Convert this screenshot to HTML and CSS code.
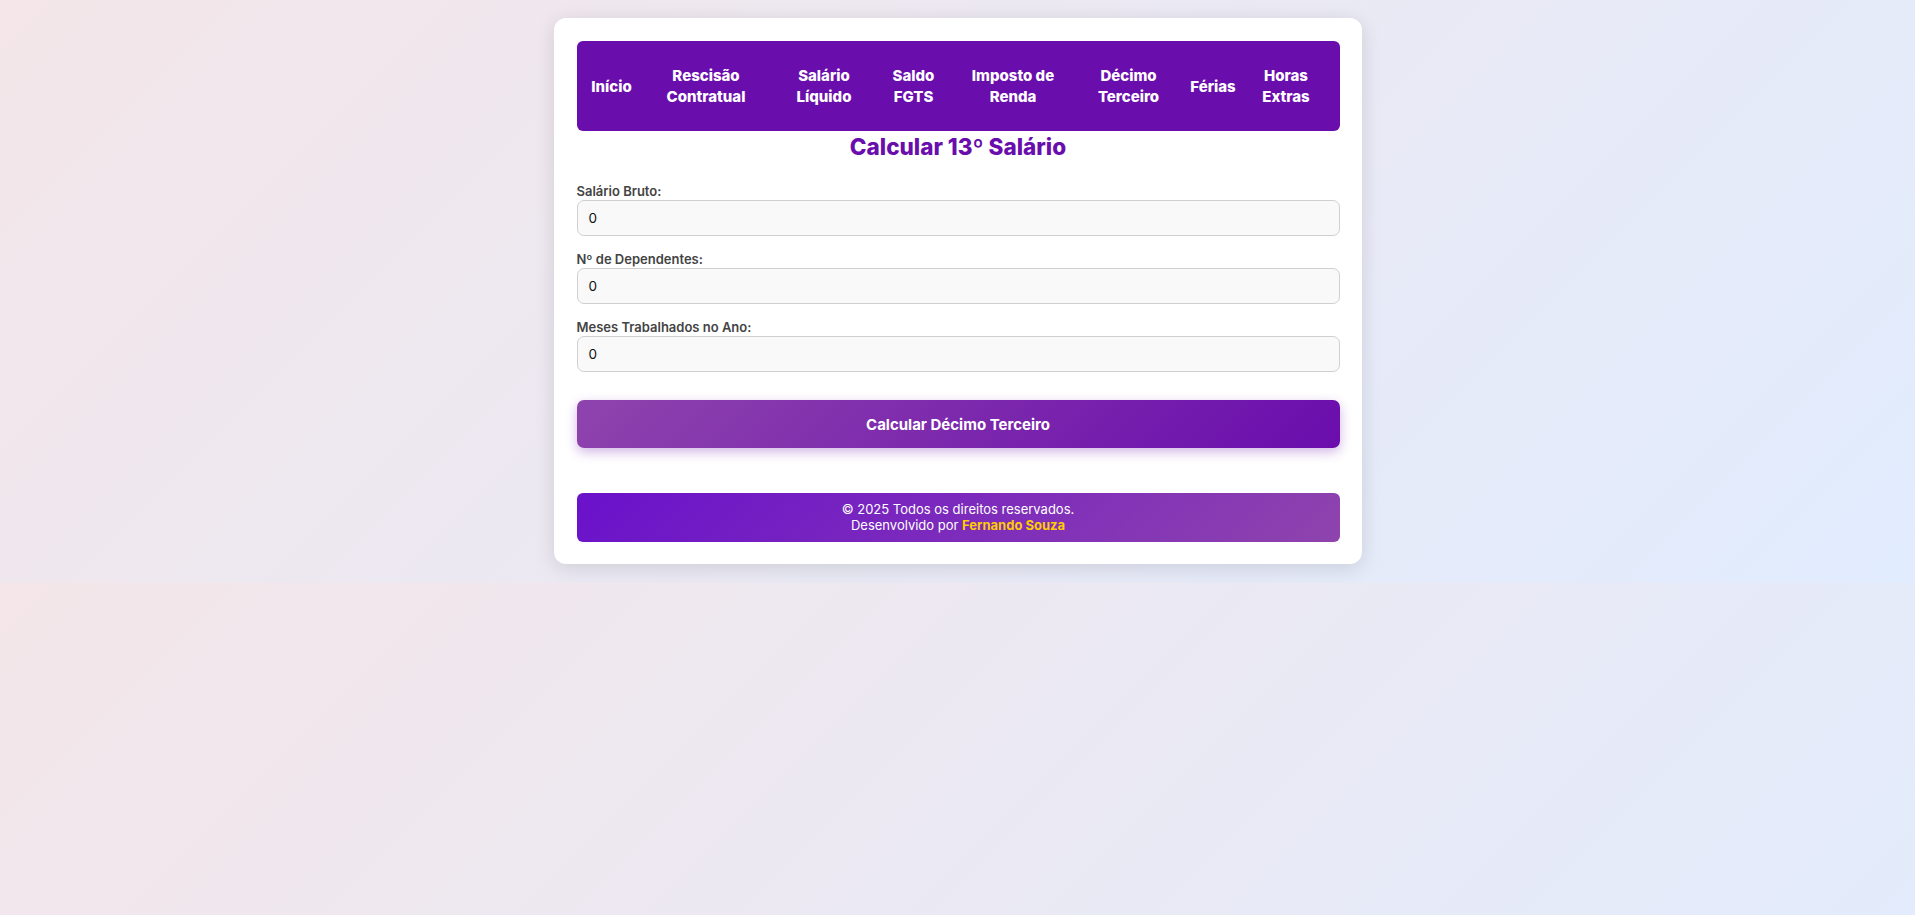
FILE: index.html
```html
<!DOCTYPE html>
<html lang="pt-BR">
<head>
<meta charset="utf-8">
<title>Calcular 13º Salário</title>
<link rel="stylesheet" href="styles.css">
</head>
<body>
<div class="card">
  <nav class="nav">
    <a class="nav-item" href="#">Início</a>
    <a class="nav-item" href="#">Rescisão<br>Contratual</a>
    <a class="nav-item" href="#">Salário<br>Líquido</a>
    <a class="nav-item" href="#">Saldo<br>FGTS</a>
    <a class="nav-item" href="#">Imposto de<br>Renda</a>
    <a class="nav-item" href="#">Décimo<br>Terceiro</a>
    <a class="nav-item" href="#">Férias</a>
    <a class="nav-item" href="#">Horas<br>Extras</a>
  </nav>
  <h2 class="title">Calcular 13º Salário</h2>
  <form class="form">
    <div class="field">
      <label class="label" for="salario">Salário Bruto:</label>
      <input class="input" id="salario" type="number" value="0">
    </div>
    <div class="field">
      <label class="label" for="dep">Nº de Dependentes:</label>
      <input class="input" id="dep" type="number" value="0">
    </div>
    <div class="field">
      <label class="label" for="meses">Meses Trabalhados no Ano:</label>
      <input class="input" id="meses" type="number" value="0">
    </div>
    <button class="btn" type="button">Calcular Décimo Terceiro</button>
  </form>
  <footer class="footer">
    <div>© 2025 Todos os direitos reservados.</div>
    <div>Desenvolvido por <span class="author">Fernando Souza</span></div>
  </footer>
</div>
</body>
</html>
```

FILE: styles.css
```css
html, body { margin: 0; }
body {
  padding: 18px 0 19px;
  font-family: Inter, "Noto Sans", sans-serif;
  background: linear-gradient(135deg, #f4e6e9 0%, #e1ecfe 100%);
}
.card {
  width: 763px;
  margin: 0 auto;
  padding: 23px 22px 22px 23px;
  background: #fff;
  border-radius: 12px;
  box-shadow: 0 4px 20px rgba(0, 0, 0, 0.12);
}
.nav {
  display: grid;
  grid-template-columns: 70px 119px 117px 62px 137px 94px 75px 71px;
  align-items: center;
  height: 90px;
  background: #6a0dad;
  border-radius: 6px;
}
.nav-item {
  justify-self: center;
  text-align: center;
  color: #fff;
  text-decoration: none;
  font-weight: 800;
  font-size: 15px;
  line-height: 21px;
}
.title {
  margin: 2px 0 22px;
  text-align: center;
  color: #6a0dad;
  font-size: 22.5px;
  line-height: 28px;
  font-weight: 800;
}
.form { display: flex; flex-direction: column; }
.field { display: flex; flex-direction: column; margin-bottom: 15px; }
.label {
  font-size: 13px;
  line-height: 16px;
  font-weight: 600;
  color: #444;
  margin-bottom: 1px;
}
.input {
  box-sizing: border-box;
  height: 36px;
  padding: 0 11px;
  border: 1.5px solid #d0d0d0;
  border-radius: 7px;
  background: #f9f9f9;
  font-family: inherit;
  font-size: 13.5px;
  color: #111;
  outline: none;
  -moz-appearance: textfield;
}
.input::-webkit-outer-spin-button,
.input::-webkit-inner-spin-button { -webkit-appearance: none; margin: 0; }
.btn {
  margin-top: 13px;
  height: 48px;
  border: none;
  border-radius: 7px;
  background: linear-gradient(135deg, #8e44ad 0%, #6a0dad 100%);
  color: #fff;
  font-family: inherit;
  font-size: 15px;
  font-weight: 700;
  box-shadow: 0 4px 12px rgba(106, 13, 173, 0.3);
}
.footer {
  margin-top: 45px;
  height: 49px;
  box-sizing: border-box;
  padding-top: 8px;
  border-radius: 6px;
  background: linear-gradient(135deg, #6a11cb 0%, #8e44ad 100%);
  color: #fff;
  text-align: center;
  font-size: 13px;
  line-height: 16px;
}
.author { color: #ffcc00; font-weight: 700; }
```
